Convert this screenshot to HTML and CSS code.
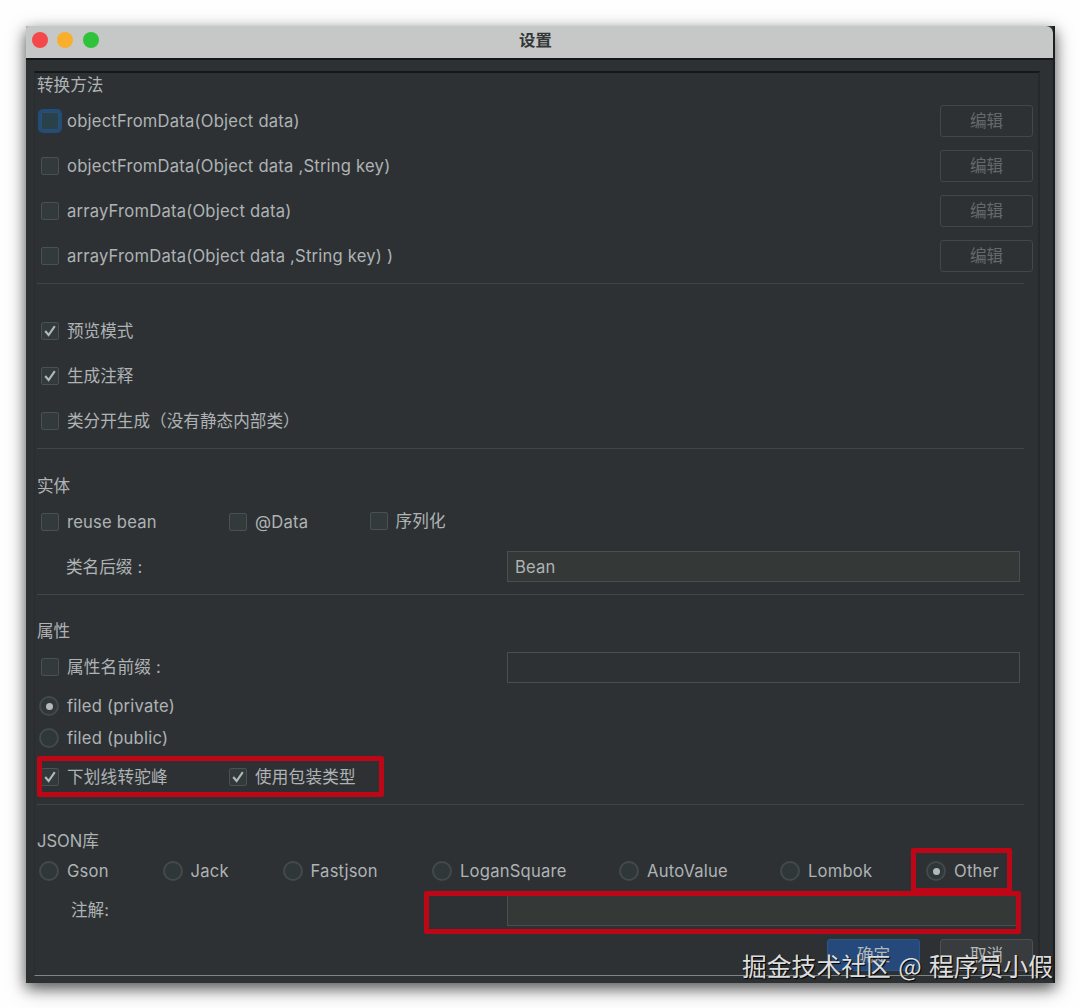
FILE: index.html
```html
<!DOCTYPE html>
<html lang="zh-CN">
<head>
<meta charset="utf-8">
<title>设置</title>
<link rel="stylesheet" href="styles.css">
</head>
<body>
<svg class="defs" width="0" height="0"><defs>
  <symbol id="tick" viewBox="0 0 18 18"><path d="M4.2 9 7.6 13 13.8 4.2" fill="none" stroke="#b4b8b9" stroke-width="2.1"/></symbol>
</defs></svg>
<div class="window">
  <header class="titlebar">
    <div class="lights"><i class="light close"></i><i class="light minimize"></i><i class="light zoom"></i></div>
    <h1 class="title">设置</h1>
  </header>
  <main class="panel">
    <section class="group">
      <h2 class="heading">转换方法</h2>
      <div class="row"><label class="option"><i class="box focused"></i><span>objectFromData(Object data)</span></label><button class="button ghost">编辑</button></div>
      <div class="row"><label class="option"><i class="box"></i><span>objectFromData(Object data ,String key)</span></label><button class="button ghost">编辑</button></div>
      <div class="row"><label class="option"><i class="box"></i><span>arrayFromData(Object data)</span></label><button class="button ghost">编辑</button></div>
      <div class="row"><label class="option"><i class="box"></i><span>arrayFromData(Object data ,String key) )</span></label><button class="button ghost">编辑</button></div>
    </section>
    <section class="group modes">
      <div class="row"><label class="option"><i class="box"><svg><use href="#tick"/></svg></i><span>预览模式</span></label></div>
      <div class="row"><label class="option"><i class="box"><svg><use href="#tick"/></svg></i><span>生成注释</span></label></div>
      <div class="row"><label class="option"><i class="box"></i><span>类分开生成（没有静态内部类）</span></label></div>
    </section>
    <section class="group entity">
      <h2 class="heading">实体</h2>
      <div class="row columns">
        <label class="option"><i class="box"></i><span>reuse bean</span></label>
        <label class="option"><i class="box"></i><span>@Data</span></label>
        <label class="option raised"><i class="box"></i><span>序列化</span></label>
      </div>
      <div class="row"><span class="label">类名后缀<span class="colon">:</span></span><div class="field filled">Bean</div></div>
    </section>
    <section class="group props">
      <h2 class="heading">属性</h2>
      <div class="row prefix"><label class="option"><i class="box"></i><span>属性名前缀<span class="colon">:</span></span></label><div class="field"></div></div>
      <div class="row short"><label class="option"><i class="radio on"></i><span>filed (private)</span></label></div>
      <div class="row short"><label class="option"><i class="radio"></i><span>filed (public)</span></label></div>
      <div class="row columns">
        <label class="option"><i class="box"><svg><use href="#tick"/></svg></i><span>下划线转驼峰</span></label>
        <label class="option"><i class="box"><svg><use href="#tick"/></svg></i><span>使用包装类型</span></label>
      </div>
    </section>
    <section class="group json">
      <h2 class="heading">JSON库</h2>
      <div class="row libs">
        <label class="option"><i class="radio"></i><span>Gson</span></label>
        <label class="option"><i class="radio"></i><span>Jack</span></label>
        <label class="option"><i class="radio"></i><span>Fastjson</span></label>
        <label class="option"><i class="radio"></i><span>LoganSquare</span></label>
        <label class="option"><i class="radio"></i><span>AutoValue</span></label>
        <label class="option"><i class="radio"></i><span>Lombok</span></label>
        <label class="option"><i class="radio on"></i><span>Other</span></label>
      </div>
      <div class="row note"><span class="label">注解:</span><div class="field filled"></div></div>
    </section>
    <footer class="actions"><button class="button primary">确定</button><button class="button">取消</button></footer>
  </main>
</div>
<div class="mark mark-naming"></div>
<div class="mark mark-other"></div>
<div class="mark mark-note"></div>
<div class="watermark">掘金技术社区 @ 程序员小假</div>
</body>
</html>
```
FILE: styles.css
```css
* { box-sizing: border-box; }
body {
  margin: 0; height: 1008px; overflow: hidden; position: relative;
  padding: 26px 25px 0 26px; background: #fefefe; color: #afb3b4;
  font: 16.6px/24px Inter, "Noto Sans CJK SC", sans-serif;
}
.defs { position: absolute; }
.window {
  height: 957px; background: #2d3134; border-right: 2px solid #1b1f21;
  border-radius: 2px 0 0 0;
  box-shadow: 0 5px 13px rgba(0,0,0,.45), 0 6px 20px rgba(0,0,0,.35);
}
.titlebar {
  height: 34px; background: #c6c8c7; border-bottom: 2px solid #15191b;
  border-radius: 2px 7px 0 0; display: grid; grid-template-columns: 1fr auto 1fr;
  align-items: center; padding: 0 6px 5px;
}
.lights { display: flex; gap: 9.7px; margin-left: -.4px; }
.light { width: 16px; height: 16px; border-radius: 50%; }
.close { background: #f4484a; }
.minimize { background: #f9ae2c; }
.zoom { background: #2fc23b; }
.title { margin: 0; font-size: 16.4px; font-weight: 600; color: #333637; transform: translateX(-4px); }
.panel {
  margin: 11px 13px 0 8px; height: 905px;
  border-top: 2px solid #14181a; border-right: 2px solid #25292b;
  border-left: 1px solid #282c2e; border-bottom: 1px solid #808485;
  padding: 0 5px 0 2px; display: flex; flex-direction: column;
}
.group { flex: none; }
.group:first-child { margin-top: -1px; }
.group + .group::before {
  content: ""; display: block; height: 1px; background: #414547;
  margin: 5px 9px 24px 0;
}
.group.props::before, .group.json::before { margin-bottom: 23px; }
.heading { margin: 0; height: 26px; line-height: 26px; font-size: inherit; font-weight: 400; }
.row { height: 45px; display: flex; align-items: center; justify-content: space-between; }
.row.prefix { height: 46px; }
.row.short { height: 32px; }
.row.libs { height: 34px; display: grid; grid-template-columns: 123.5px 120px 149.5px 187px 161px 146px auto; justify-content: start; }
.row.note { height: 44px; }
.row.columns { display: grid; grid-template-columns: 188px 140.5px auto; justify-content: start; }
.option { display: flex; align-items: center; white-space: nowrap; letter-spacing: .21px; }
.modes .option { letter-spacing: .03px; }
.box { flex: none; width: 18px; height: 18px; margin: 0 8px 0 4px; border: 1px solid #4a5152; border-radius: 2px; background: #323a3c; }
.box svg { display: block; width: 18px; height: 18px; margin: -1px; }
.box.focused { border-color: #29506d; background: #29414b; box-shadow: 0 0 0 3px #244c78; }
.raised { transform: translateY(-1px); }
.radio { flex: none; width: 20px; height: 20px; margin: 0 8px 0 2px; border: 2px solid #434a4b; border-radius: 50%; background: #303739; display: grid; place-items: center; }
.radio.on::after { content: ""; width: 7px; height: 7px; border-radius: 50%; background: #b5b9ba; }
.label { padding-left: 29px; }
.note .label { padding-left: 34px; }
.colon { margin-left: 5px; }
.field { width: 513px; height: 31px; margin-right: 13px; border: 1px solid #494e4f; padding: 0 7px; line-height: 30px; letter-spacing: .2px; }
.field.filled { background: #343938; }
.button { width: 93px; height: 32px; padding: 0; border: 1px solid #4c5052; border-radius: 3px; background: #383c3e; color: #b5b8b9; font: inherit; }
.button.ghost { background: transparent; color: #65696b; border-color: #43474a; border-width: 1.5px; }
.button.primary { background: #24497a; border-color: #2d5688; }
.actions { display: flex; justify-content: flex-end; gap: 20px; margin-top: 7px; }
.mark { position: absolute; border: 5px solid #bd0717; border-radius: 2px; }
.mark-naming { left: 37px; top: 756px; width: 347px; height: 41px; }
.mark-other { left: 911px; top: 848px; width: 101px; height: 45px; }
.mark-note { left: 424px; top: 891px; width: 597px; height: 43px; }
.watermark {
  position: absolute; left: 742px; top: 948px; font: 24.8px/34px "Noto Sans CJK SC", sans-serif;
  color: #dedede; white-space: nowrap; word-spacing: 1.8px; text-shadow: 1px 1px 1px #000;
}
```
